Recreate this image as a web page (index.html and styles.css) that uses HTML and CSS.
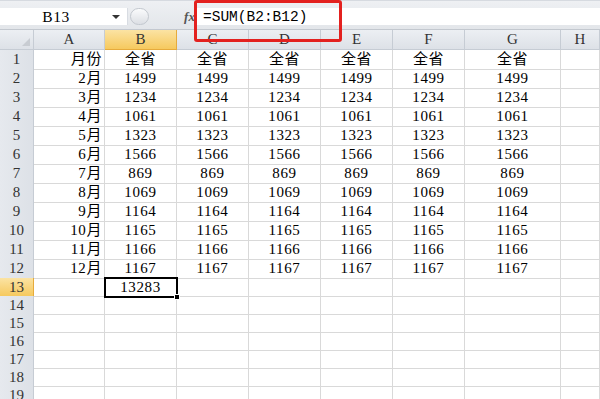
FILE: index.html
```html
<!DOCTYPE html>
<html>
<head>
<meta charset="utf-8">
<link rel="stylesheet" href="styles.css">
</head>
<body>
<div class="app">
  <div class="toolbar">
    <div class="namebox">B13</div>
    <div class="dd"><span class="tri"></span></div>
    <div class="splitter"><span class="knob"></span></div>
    <div class="fxcell"><span class="fx">fx</span></div>
    <div class="formula">=SUM(B2:B12)</div>
  </div>
  <div class="hl"></div>
  <div class="sheet">
    <div class="row head">
      <div class="corner"><span class="ctri"></span></div>
      <div class="ch">A</div><div class="ch on">B</div><div class="ch">C</div><div class="ch">D</div><div class="ch">E</div><div class="ch">F</div><div class="ch">G</div><div class="ch">H</div>
    </div>
    <div class="row tall"><div class="rh">1</div><div class="c a">月份</div><div class="c">全省</div><div class="c">全省</div><div class="c">全省</div><div class="c">全省</div><div class="c">全省</div><div class="c">全省</div><div class="c"></div></div>
    <div class="row tall"><div class="rh">2</div><div class="c a">2月</div><div class="c">1499</div><div class="c">1499</div><div class="c">1499</div><div class="c">1499</div><div class="c">1499</div><div class="c">1499</div><div class="c"></div></div>
    <div class="row tall"><div class="rh">3</div><div class="c a">3月</div><div class="c">1234</div><div class="c">1234</div><div class="c">1234</div><div class="c">1234</div><div class="c">1234</div><div class="c">1234</div><div class="c"></div></div>
    <div class="row tall"><div class="rh">4</div><div class="c a">4月</div><div class="c">1061</div><div class="c">1061</div><div class="c">1061</div><div class="c">1061</div><div class="c">1061</div><div class="c">1061</div><div class="c"></div></div>
    <div class="row tall"><div class="rh">5</div><div class="c a">5月</div><div class="c">1323</div><div class="c">1323</div><div class="c">1323</div><div class="c">1323</div><div class="c">1323</div><div class="c">1323</div><div class="c"></div></div>
    <div class="row tall"><div class="rh">6</div><div class="c a">6月</div><div class="c">1566</div><div class="c">1566</div><div class="c">1566</div><div class="c">1566</div><div class="c">1566</div><div class="c">1566</div><div class="c"></div></div>
    <div class="row tall"><div class="rh">7</div><div class="c a">7月</div><div class="c">869</div><div class="c">869</div><div class="c">869</div><div class="c">869</div><div class="c">869</div><div class="c">869</div><div class="c"></div></div>
    <div class="row tall"><div class="rh">8</div><div class="c a">8月</div><div class="c">1069</div><div class="c">1069</div><div class="c">1069</div><div class="c">1069</div><div class="c">1069</div><div class="c">1069</div><div class="c"></div></div>
    <div class="row tall"><div class="rh">9</div><div class="c a">9月</div><div class="c">1164</div><div class="c">1164</div><div class="c">1164</div><div class="c">1164</div><div class="c">1164</div><div class="c">1164</div><div class="c"></div></div>
    <div class="row tall"><div class="rh">10</div><div class="c a">10月</div><div class="c">1165</div><div class="c">1165</div><div class="c">1165</div><div class="c">1165</div><div class="c">1165</div><div class="c">1165</div><div class="c"></div></div>
    <div class="row tall"><div class="rh">11</div><div class="c a">11月</div><div class="c">1166</div><div class="c">1166</div><div class="c">1166</div><div class="c">1166</div><div class="c">1166</div><div class="c">1166</div><div class="c"></div></div>
    <div class="row tall"><div class="rh">12</div><div class="c a">12月</div><div class="c">1167</div><div class="c">1167</div><div class="c">1167</div><div class="c">1167</div><div class="c">1167</div><div class="c">1167</div><div class="c"></div></div>
    <div class="row"><div class="rh on">13</div><div class="c a"></div><div class="c sel">13283<span class="handle"></span></div><div class="c"></div><div class="c"></div><div class="c"></div><div class="c"></div><div class="c"></div><div class="c"></div></div>
    <div class="row"><div class="rh">14</div><div class="c"></div><div class="c"></div><div class="c"></div><div class="c"></div><div class="c"></div><div class="c"></div><div class="c"></div><div class="c"></div></div>
    <div class="row"><div class="rh">15</div><div class="c"></div><div class="c"></div><div class="c"></div><div class="c"></div><div class="c"></div><div class="c"></div><div class="c"></div><div class="c"></div></div>
    <div class="row"><div class="rh">16</div><div class="c"></div><div class="c"></div><div class="c"></div><div class="c"></div><div class="c"></div><div class="c"></div><div class="c"></div><div class="c"></div></div>
    <div class="row"><div class="rh">17</div><div class="c"></div><div class="c"></div><div class="c"></div><div class="c"></div><div class="c"></div><div class="c"></div><div class="c"></div><div class="c"></div></div>
    <div class="row"><div class="rh">18</div><div class="c"></div><div class="c"></div><div class="c"></div><div class="c"></div><div class="c"></div><div class="c"></div><div class="c"></div><div class="c"></div></div>
    <div class="row"><div class="rh">19</div><div class="c"></div><div class="c"></div><div class="c"></div><div class="c"></div><div class="c"></div><div class="c"></div><div class="c"></div><div class="c"></div></div>
  </div>
</div>
</body>
</html>
```

FILE: styles.css
```css
* { box-sizing: border-box; }
html, body { margin: 0; padding: 0; background: #fff; }
body { width: 600px; height: 399px; overflow: hidden; }
.app { position: relative; width: 600px; height: 399px; overflow: hidden;
  font-family: "Liberation Serif", "Noto Sans CJK SC", serif; color: #000; }

.toolbar { display: flex; height: 30px; padding: 7px 0 4px;
  background: linear-gradient(#eef0f3, #e3e6ea);
  border-top: 1px solid #d6dae0; border-bottom: 1px solid #c3c8cf; }
.namebox { width: 110px; background: #fff; font-size: 15.5px; line-height: 18px;
  text-align: center; padding-left: 2px; letter-spacing: 0.5px; }
.dd { width: 18px; background: #fff; display: flex; align-items: center; justify-content: center;
  border-right: 1px solid #d8dce2; }
.tri { width: 0; height: 0; border-left: 4px solid transparent; border-right: 4px solid transparent;
  border-top: 4px solid #333; margin-left: -6px; }
.splitter { width: 55px; display: flex; align-items: center; padding-left: 2px; }
.knob { width: 19px; height: 17px; border-radius: 9px; border: 1px solid #c3c8cf;
  background: linear-gradient(#fafbfc, #dcdfe4); }
.fxcell { width: 13px; display: flex; align-items: center; justify-content: center; }
.fx { font-family: "Liberation Serif", serif; font-style: italic; font-weight: bold; font-size: 13px; color: #555; }
.formula { flex: 1; background: #fff; border-left: 1px solid #c3c8cf; font-size: 14.5px;
  font-family: "Liberation Mono", monospace; line-height: 18px; padding-left: 6px; }

.hl { position: absolute; left: 194px; top: 0; width: 148px; height: 42px;
  border: 3px solid #e3211f; border-radius: 3px; z-index: 5; }

.sheet { display: flex; flex-direction: column; }
.row { display: grid; grid-template-columns: 34px 71px 72px 72px 72px 72px 72px 96px 1fr;
  height: 18px; }
.row.tall { height: 19px; }
.row.head { height: 20px; }

.corner, .ch, .rh { background: linear-gradient(#eceff3, #dde1e7); color: #333;
  font-size: 15px; line-height: 19px; text-align: center;
  border-right: 1px solid #c6ccd4; border-bottom: 1px solid #c6ccd4; }
.corner { position: relative; }
.ctri { position: absolute; right: 3px; bottom: 3px; width: 0; height: 0;
  border-left: 8px solid transparent; border-bottom: 8px solid #c8ccd2; }
.ch.on, .rh.on { background: linear-gradient(#fbe3a3, #f6c95e); border-color: #e6ab3c; color: #333; }
.rh { font-size: 15px; line-height: 18px; background: linear-gradient(90deg, #e6e9ee, #dde1e7); }
.tall .rh { line-height: 19px; }

.c { border-right: 1px solid #d9d9d9; border-bottom: 1px solid #d9d9d9; font-size: 15px;
  letter-spacing: 0.6px; line-height: 18px; text-align: center; white-space: nowrap; overflow: visible; }
.tall .c { line-height: 19px; }
.c.a { text-align: right; padding-right: 2px; }
.c.sel { position: relative; z-index: 3; outline: 2px solid #000; outline-offset: -1px;
  line-height: 18px; }
.handle { position: absolute; right: -4px; bottom: -4px; width: 6px; height: 6px;
  background: #000; border: 1px solid #fff; }
```
